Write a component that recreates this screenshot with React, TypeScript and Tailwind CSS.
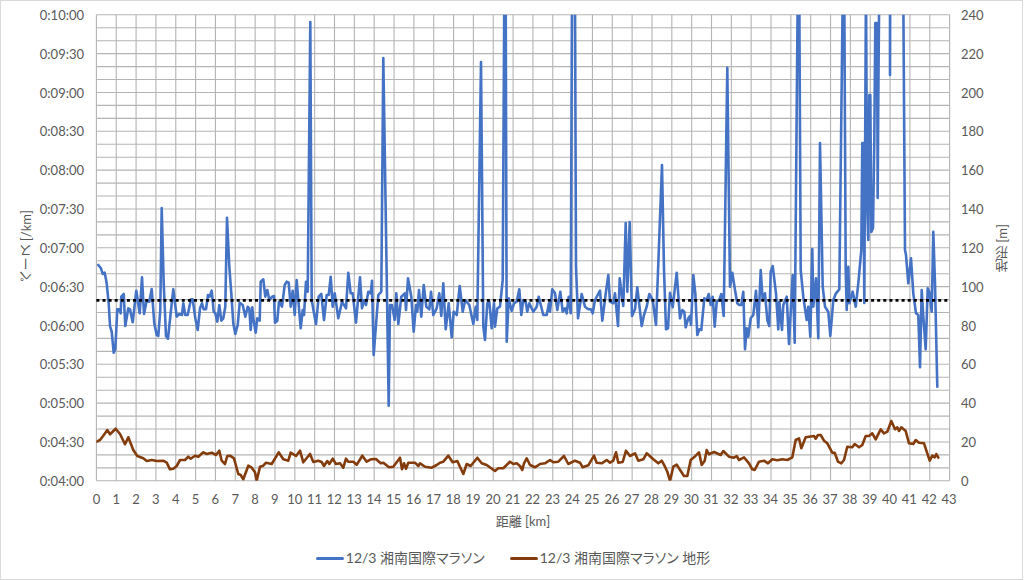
const FONT = "font-['Lato','Noto_Sans_CJK_JP',sans-serif] text-[#595959]";

// traced off the chart at 3x, so every run of numbers is x,y pairs relative to an origin
function trace(ox: number, oy: number, pts: number[]) {
  const out: string[] = [];
  for (let i = 0; i < pts.length; i += 2) {
    out.push(`${(ox + pts[i] / 3).toFixed(1)},${(oy + pts[i + 1] / 3).toFixed(1)}`);
  }
  return out.join(" ");
}

const pace = [
  trace(96, 250, [
    7, 45, 15, 55, 20, 72, 26, 68, 32, 100, 38, 160, 42, 228, 47, 245, 53, 308, 58, 298, 64, 178, 70, 178, 74, 190, 76, 140, 83, 132,
    88, 228, 97, 175, 102, 178, 110, 217, 121, 122, 131, 190, 138, 82, 144, 192, 152, 152, 160, 155, 167, 117, 175, 220, 182, 255,
    187, 258, 193, 180, 197, -126, 203, 100, 210, 258, 216, 266, 225, 180, 232, 118, 242, 200, 250, 192, 258, 195, 262, 160, 268, 195,
    275, 195, 285, 148, 290, 148, 298, 205, 305, 240, 312, 175, 318, 160, 323, 178, 330, 178, 336, 135, 341, 140, 347, 122, 353, 185,
    358, 190, 364, 215, 370, 165, 376, 212, 382, 205, 388, 170, 393, -97, 400, 50, 406, 130, 412, 220, 418, 252, 425, 225, 431, 158,
    440, 165, 448, 200, 455, 170, 460, 175, 464, 240, 469, 172, 472, 205, 479, 248, 484, 205, 491, 212, 494, 95, 502, 88, 508, 140,
    514, 120, 520, 150, 528, 140, 534, 138, 537, 218, 544, 212, 549, 155, 558, 170, 566, 105, 572, 95, 578, 98, 584, 170, 590, 122,
    596, 195, 602, 90, 607, 150, 614, 235, 620, 180, 624, 195, 630, 95, 635, 125, 643, -684,
  ]),
  trace(310, 250, [
    5, 150, 12, 190, 18, 222, 26, 140, 34, 132, 42, 210, 50, 135, 56, 135, 62, 80, 68, 170, 74, 130, 85, 205, 96, 155, 108, 175, 115, 68,
    122, 130, 128, 130, 138, 218, 150, 82, 156, 175, 162, 150, 168, 165, 175, 125, 182, 130, 186, 92, 191, 315, 205, 135, 214, 125,
    220, -576, 229, 0, 236, 467, 240, 165, 246, 165, 254, 210, 259, 130, 265, 222, 274, 140, 285, 130, 288, 180, 294, 85, 304, 140,
    311, 245, 318, 165, 322, 185, 327, 120, 334, 200, 341, 105, 349, 170, 358, 178, 363, 125, 370, 195, 380, 175, 388, 130, 394, 198,
    400, 100, 407, 238, 416, 160, 425, 262, 431, 185, 440, 195, 449, 108, 458, 185, 466, 150, 478, 165, 490, 222, 497, 170, 502, 210,
    513, -564, 520, 230, 525, 270, 532, 160, 538, 155, 545, 235, 552, 160, 555, 230, 562, 175, 570, 170, 578, 90, 583, -760, 587, -760,
    590, 275, 596, 145, 605, 183, 612, 160, 620, 155, 628, 118, 634, 195, 640, 150, 647, 155, 652, 185,
  ]),
  trace(520, 250, [
    28, 160, 40, 185, 50, 170, 56, 140, 70, 195, 80, 195, 87, 160, 90, 185, 97, 118, 105, 130, 112, 180, 121, 125, 128, 185, 135, 175,
    140, 190, 146, 140, 152, 190, 156, -760, 165, -760, 168, 50, 174, 205, 185, 132, 195, 170, 205, 178, 213, 178, 218, 190, 225, 150,
    240, 122, 247, 212, 258, 125, 265, 75, 270, 155, 280, 160, 285, 130, 294, 228, 299, 85, 310, 168, 317, -81, 322, 125, 329, -84,
    336, 198, 345, 178, 352, 112, 365, 228, 372, 195, 380, 170, 388, 132, 398, 150, 408, 225, 426, -255, 432, 60, 438, 238, 444, 235,
    450, 128, 458, 172, 470, 68, 480, 205, 487, 180, 493, 185, 497, 232, 505, 205, 510, 198, 513, 225, 520, 75, 526, 130, 532, 255,
    538, 238, 544, 240, 553, 145, 560, 150, 566, 132, 572, 165, 578, 140, 584, 230, 590, 155, 598, 150, 604, 132, 611, 198, 622, -547,
    630, 110, 637, 68, 645, 120, 652, 160,
  ]),
  trace(730, 250, [
    28, 165, 34, 165, 40, 125, 45, 298, 50, 235, 55, 260, 62, 205, 70, 195, 78, 122, 85, 232, 92, 60, 98, 150, 105, 130, 112, 210,
    118, 228, 122, 65, 128, 48, 138, 130, 145, 238, 148, 155, 156, 240, 160, 165, 170, 140, 177, 282, 188, 75, 194, 278, 203, -760,
    208, -760, 212, 60, 220, 140, 230, 210, 235, 170, 241, 260, 247, -3, 250, 170, 258, 85, 265, 265, 270, -321, 278, 110, 285, 170,
    295, 185, 301, 258, 310, 150, 318, 130, 328, 118, 338, -760, 343, -760, 347, 60, 350, 180, 355, 50, 358, 160, 368, 125, 377, 170,
    385, 100,
  ]),
  // the tangle around 39km
  trace(830, 10, [
    94, 720, 97, 399, 100, 399, 103, 879, 108, -90, 111, 570, 115, 690, 118, 255, 121, 255, 124, 666, 129, 654, 133, 390, 136, 39,
    141, 39, 143, 564, 145, 270, 148, -90, 180, -180, 180, 195, 181, -180, 219, -180, 225, 720,
  ]),
  trace(730, 250, [
    528, 15, 535, 100, 543, 25, 550, 130, 558, 190, 565, 195, 570, 352, 575, 120, 580, 200, 587, 298, 593, 115, 598, 125, 605, 185,
    610, -55, 615, 100, 622, 410,
  ]),
].join(" ");

const terrain = [
  trace(0, 290, [
    290, 455, 300, 450, 310, 437, 322, 420, 330, 433, 347, 416, 360, 432, 375, 463, 385, 442, 400, 480, 412, 498, 430, 505, 440, 513,
    455, 510, 470, 513, 490, 512, 500, 518, 510, 538, 520, 536, 530, 528, 540, 510, 555, 510, 565, 500, 572, 506, 585, 497, 595, 500,
    610, 487, 620, 492, 635, 488, 648, 495, 658, 482, 665, 512, 675, 522, 682, 498, 690, 497, 702, 505, 715, 552, 722, 555, 730, 568,
    745, 527, 755, 533, 765, 547, 770, 572, 780, 530, 790, 527, 798, 518, 815, 522, 836, 487, 850, 508, 865, 512, 872, 488, 888, 498,
    900, 482, 910, 517, 930, 492, 940, 516, 955, 512, 965, 516, 972, 528, 982, 513, 988, 522, 998, 506, 1008, 522,
  ]),
  trace(340, 290, [
    0, 520, 10, 533, 18, 506, 25, 515, 40, 515, 50, 524, 67, 497, 80, 515, 92, 508, 108, 507, 122, 520, 130, 518, 147, 532, 160, 530,
    180, 503, 186, 538, 192, 520, 198, 536, 205, 518, 225, 518, 235, 528, 240, 520, 255, 530, 275, 533, 290, 525, 300, 518, 310, 515,
    325, 497, 338, 517, 352, 513, 370, 552, 380, 522, 392, 528, 412, 503, 425, 520, 440, 525, 465, 543, 475, 535, 490, 535, 510, 515,
    520, 522, 530, 520, 540, 528, 547, 540, 552, 520, 560, 505, 570, 525, 585, 532, 600, 522, 615, 520, 630, 510, 640, 517, 655, 515,
    672, 498, 685, 522, 705, 512, 720, 518, 728, 532, 745, 526, 762, 497, 770, 518, 785, 520, 800, 510, 810, 518, 820, 512, 828, 487,
    835, 518, 848, 516, 858, 482, 870, 498, 885, 490, 895, 512, 910, 508, 920, 490, 940, 508, 955, 520, 965, 512, 975, 530, 982, 545,
    990, 572, 1000, 530, 1010, 524,
  ]),
  trace(684, 290, [
    0, 558, 10, 558, 20, 510, 30, 502, 45, 487, 53, 525, 62, 512, 68, 480, 75, 493, 90, 486, 110, 495, 118, 483, 135, 500, 150, 503,
    158, 498, 165, 510, 180, 502, 195, 520, 205, 538, 212, 540, 225, 515, 240, 512, 252, 520, 265, 508, 280, 511, 295, 508, 310, 510,
    325, 502, 335, 450, 345, 445, 352, 475, 365, 442, 390, 438, 395, 446, 402, 435, 410, 435, 420, 452, 430, 460, 445, 488, 452, 488,
    462, 515, 472, 520, 480, 510, 490, 470, 505, 472, 512, 462, 525, 472, 535, 465, 545, 438, 555, 438, 565, 430, 575, 448, 590, 418,
    600, 430, 610, 425, 622, 393, 633, 418, 640, 412, 645, 423, 652, 412, 665, 423, 675, 460, 688, 462, 695, 450, 705, 458, 720, 460,
    730, 490, 737, 512, 745, 497, 752, 502, 757, 492, 763, 503,
  ]),
].join(" ");

const PLOT = { left: 96.4, right: 949.6, top: 14.8, bottom: 480.8 };
const paceTicks = ["0:10:00", "0:09:30", "0:09:00", "0:08:30", "0:08:00", "0:07:30", "0:07:00", "0:06:30", "0:06:00", "0:05:30", "0:05:00", "0:04:30", "0:04:00"];
const terrainTicks = ["240", "220", "200", "180", "160", "140", "120", "100", "80", "60", "40", "20", "0"];
const kmTicks = Array.from({ length: 44 }, (_, i) => i);

function Plot() {
  const w = PLOT.right - PLOT.left;
  const h = PLOT.bottom - PLOT.top;
  return (
    <svg width={856} height={468} viewBox="95 14 856 468" className="shrink-0">
      <defs>
        <clipPath id="plot-area">
          <rect x={PLOT.left} y={PLOT.top} width={w} height={h} />
        </clipPath>
      </defs>
      {Array.from({ length: 37 }, (_, i) => {
        const y = PLOT.top + (h * i) / 36;
        return <line key={i} x1={PLOT.left} x2={PLOT.right} y1={y} y2={y} stroke="#b4b4b4" strokeWidth={1.1} />;
      })}
      {kmTicks.map((i) => {
        const x = PLOT.left + (w * i) / 43;
        return <line key={i} x1={x} x2={x} y1={PLOT.top} y2={PLOT.bottom} stroke="#b4b4b4" strokeWidth={1.1} />;
      })}
      <g clipPath="url(#plot-area)" fill="none" strokeWidth={2.6} strokeLinejoin="round" strokeLinecap="round">
        <polyline points={terrain} stroke="#843c0c" />
        <polyline points={pace} stroke="#4472c4" />
      </g>
      <line x1={PLOT.left} x2={PLOT.right} y1={300.4} y2={300.4} stroke="#000" strokeWidth={2.6} strokeDasharray="3 3.1" />
    </svg>
  );
}

function LegendItem({ color, label }: { color: string; label: string }) {
  return (
    <div className="flex items-center gap-[2px]">
      <span className={`h-[3px] w-[28px] rounded-full ${color}`} />
      <span className="text-[14px] leading-5 [font-feature-settings:'palt']">{label}</span>
    </div>
  );
}

export default function App() {
  return (
    <div className={`box-border h-[580px] w-[1023px] border border-[#d9d9d9] bg-white pt-[13px] ${FONT}`}>
      <div className="flex h-[468px]">
        <div className="relative flex w-[94px] shrink-0 items-center justify-end pr-[11px]">
          <span className="absolute left-[15px] top-[196px] text-[13px] leading-5 [writing-mode:vertical-rl] rotate-180 [font-feature-settings:'palt']">ペース [/km]</span>
          <div className="-my-[7px] flex h-[482px] flex-col justify-between">
            {paceTicks.map((t) => (
              <div key={t} className="h-4 text-[13px] leading-4">{t}</div>
            ))}
          </div>
        </div>
        <Plot />
        <div className="-my-[7px] ml-[10px] flex h-[482px] w-[26px] shrink-0 flex-col justify-between">
          {terrainTicks.map((t) => (
            <div key={t} className="h-4 text-[13px] leading-4">{t}</div>
          ))}
        </div>
        <div className="flex w-[30px] items-center justify-center pt-[-2px]">
          <span className="text-[13px] leading-5 [writing-mode:vertical-rl] rotate-180 [font-feature-settings:'palt']">地形 [m]</span>
        </div>
      </div>

      <div className="ml-[95.4px] mt-[9px] flex h-4 w-[853.2px] justify-between text-[13px] leading-4">
        {kmTicks.map((i) => (
          <div key={i} className="flex w-0 justify-center whitespace-nowrap">{i}</div>
        ))}
      </div>
      <div className="ml-[94px] mt-[4px] w-[856px] text-center text-[13px] leading-5 [font-feature-settings:'palt']">距離 [km]</div>
      <div className="mt-[17px] flex justify-center gap-[25px] pl-[3px]">
        <LegendItem color="bg-[#4472c4]" label="12/3 湘南国際マラソン" />
        <LegendItem color="bg-[#843c0c]" label="12/3 湘南国際マラソン 地形" />
      </div>
    </div>
  );
}
